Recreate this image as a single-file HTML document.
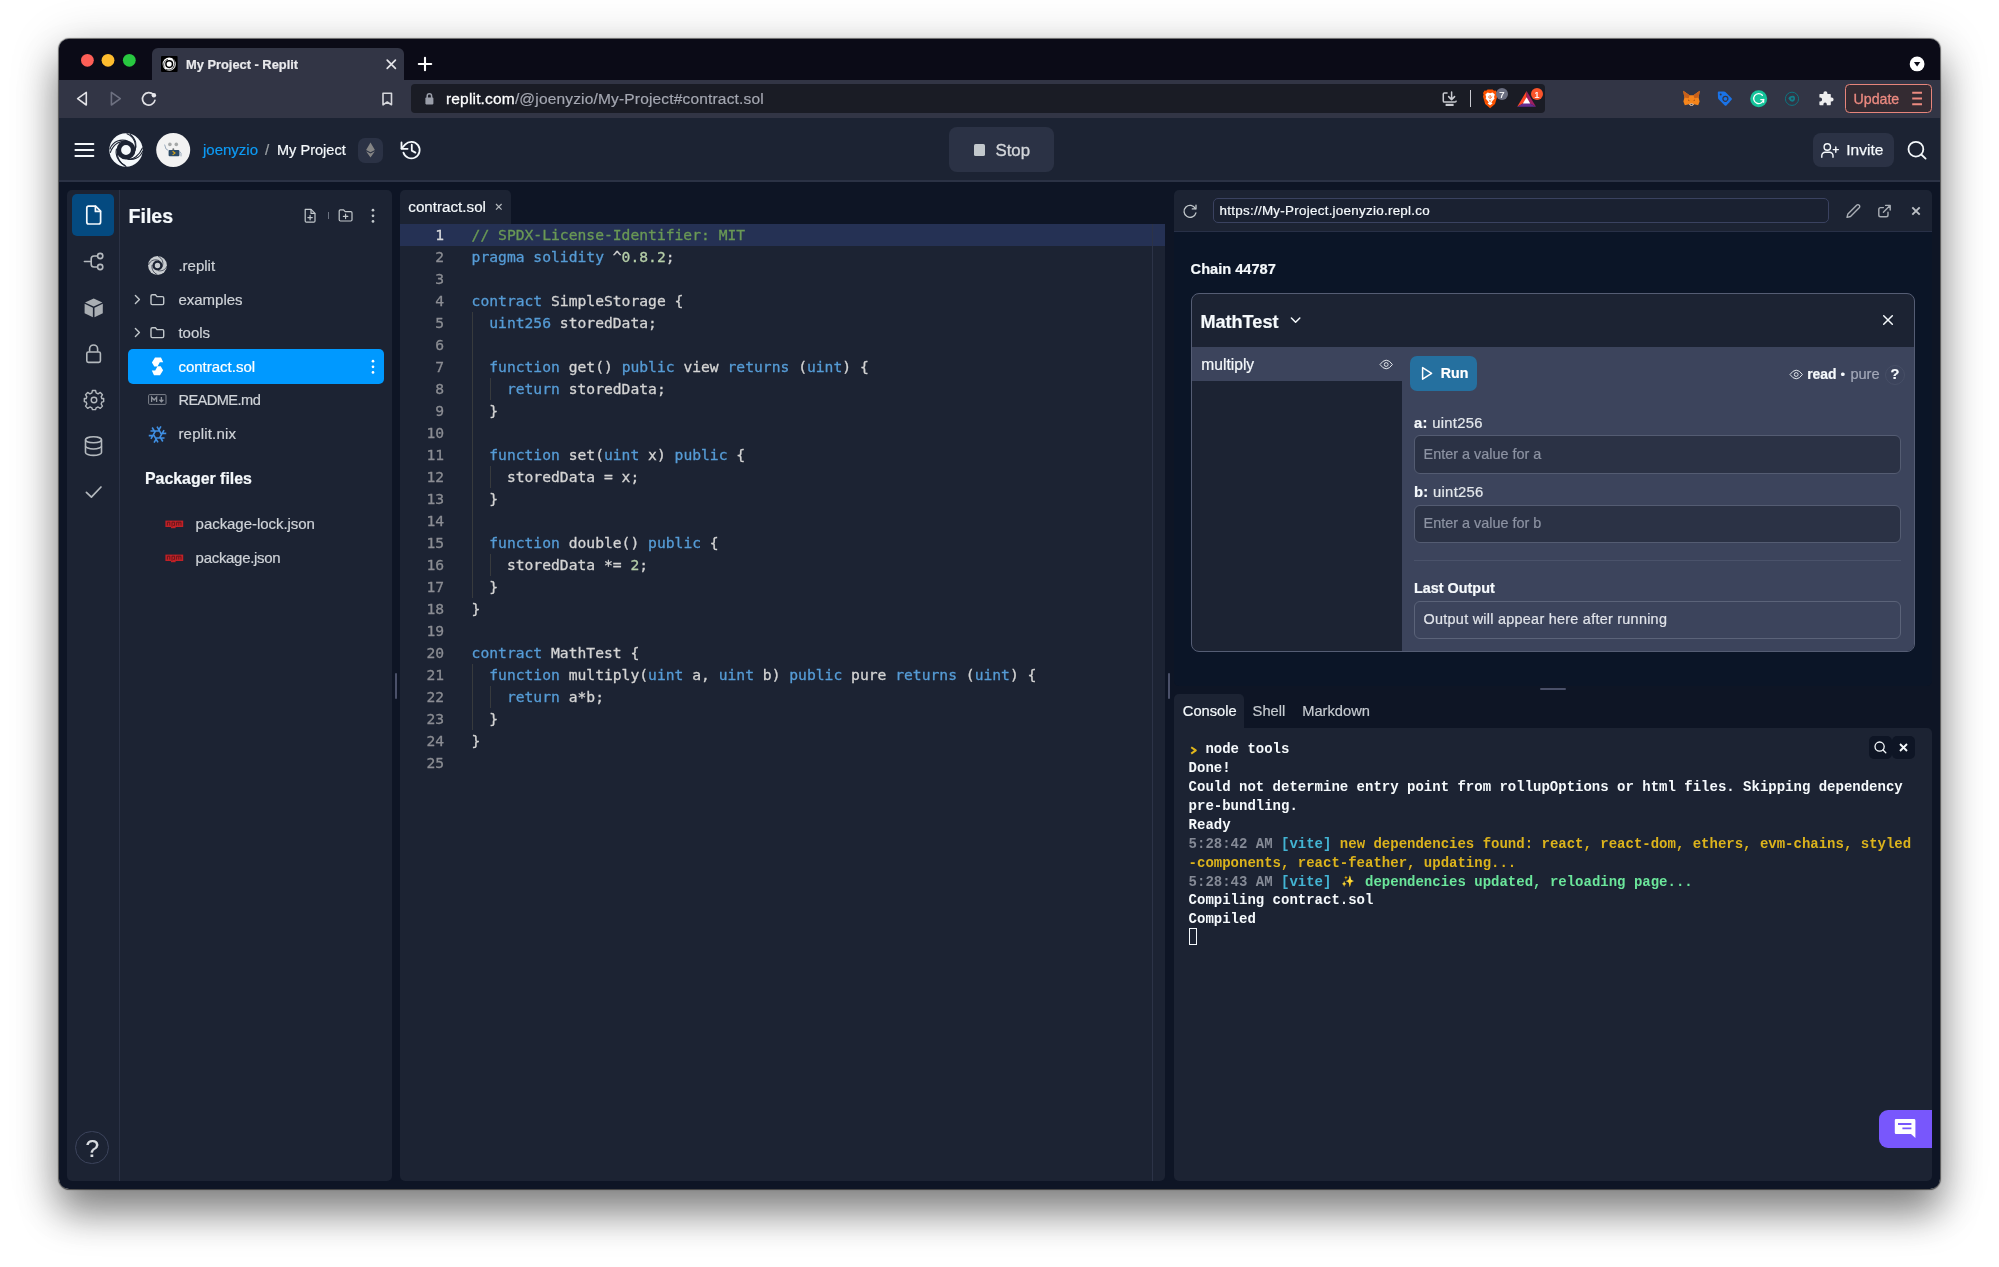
<!DOCTYPE html>
<html lang="en">
<head>
<meta charset="utf-8">
<title>My Project - Replit</title>
<style>
*{box-sizing:border-box;margin:0;padding:0}
html,body{width:1999px;height:1267px;overflow:hidden;background:#fff}
body{font-family:"Liberation Sans",sans-serif;color:#f5f9fc;position:relative}
#shadow{position:absolute;left:59px;top:39px;width:1881px;height:1150px;border-radius:11px;
  box-shadow:0 0 1px 0.5px rgba(0,0,0,.55),0 25px 38px 0 rgba(0,0,0,.40),0 8px 50px 0 rgba(0,0,0,.22)}
#win{position:absolute;left:59px;top:39px;width:1881px;height:1150px;border-radius:10px;overflow:hidden;background:#0e1525}
#pg{position:absolute;left:-59px;top:-39px;width:1999px;height:1267px;will-change:transform}
.abs{position:absolute}
svg{position:absolute;overflow:visible}
.t{position:absolute;white-space:nowrap;line-height:1;-webkit-text-stroke:.2px currentColor}
/* browser chrome */
#tabstrip{left:59px;top:39px;width:1881px;height:41px;background:#0b0b17}
#tab{left:152px;top:48px;width:252px;height:33px;background:#323545;border-radius:6px 6px 0 0}
#toolbar{left:59px;top:80px;width:1881px;height:38px;background:#323545}
#urlbar{left:411px;top:84px;width:1134px;height:29px;background:#1a1c25;border-radius:4px}
#update{left:1844.8px;top:84px;width:87.2px;height:29px;border:1.5px solid #e7857b;border-radius:4.5px;background:#342b32}
/* replit header */
#hdr{left:59px;top:118px;width:1881px;height:63px;background:#1c2333}
#hdrline{left:59px;top:180px;width:1881px;height:2px;background:#2b3245}
.btn{position:absolute;background:#2b3245;border-radius:8px}
.ft{left:178.4px;font-size:15px;color:#cfd3d8}
#code{left:400px;top:224px;width:752px;font-family:"DejaVu Sans Mono","Liberation Mono",monospace;font-size:14.66px;color:#d4d4d4;-webkit-text-stroke:.3px currentColor}
.ln{white-space:pre;height:22px;line-height:21px;position:relative;padding-left:71.6px}
.ln i{position:absolute;left:0;width:44.1px;text-align:right;font-style:normal;color:#8b8d93}
.ln i.cur{color:#d6d7da}
.k{color:#569cd6}.c{color:#6a9955}.n{color:#b5cea8}
.inp{left:1414px;width:487.4px;height:38.2px;border:1px solid #545c72;border-radius:6px;background:#2b3245}
.ph{left:1423.6px;font-size:14.4px;color:#8d93a3}
#con{left:1188.6px;top:740.3px;font-family:"Liberation Mono","DejaVu Sans Mono",monospace;font-size:14px;font-weight:bold;color:#f5f9fc}
#con div{white-space:pre;height:18.9px;line-height:18.9px;position:relative}
#con .g{color:#858a96}#con .cy{color:#43b4d3}#con .y{color:#dcb31c}#con .gr{color:#6be69b}
#con .sp{display:inline-block;width:16.8px;font-size:11px;text-align:center;vertical-align:top;color:#fff3c4;font-weight:normal}
/* panels */
.panel{position:absolute;background:#1c2333}
</style>
</head>
<body>
<div id="shadow"></div>
<div id="win"><div id="pg">

<!-- ============ BROWSER CHROME ============ -->
<div class="abs" id="tabstrip"></div>
<div class="abs" id="tab"></div>
<div class="abs" id="toolbar"></div>
<div class="abs" id="urlbar"></div>
<!-- traffic lights -->
<svg style="left:75px;top:50px" width="70" height="22" viewBox="75 50 70 22">
  <circle cx="87.4" cy="60.3" r="6.4" fill="#fe5f57"/>
  <circle cx="108" cy="60.3" r="6.4" fill="#febc2e"/>
  <circle cx="129.3" cy="60.3" r="6.4" fill="#28c840"/>
</svg>
<!-- favicon -->
<svg style="left:161px;top:56px" width="17" height="16" viewBox="0 0 17 16">
  <rect x="0" y="0" width="16.6" height="16" rx="1" fill="#000"/>
  <circle cx="8.2" cy="8.1" r="6.6" fill="#fff"/>
  <circle cx="8.2" cy="8.1" r="3.3" fill="none" stroke="#000" stroke-width="1.5"/>
  <path d="M3.2 11.6C1.8 8 3.4 4.2 7 3.4M12 3C14.4 5.4 14.2 9.6 11.6 11.6M5 13.4C8 14.6 11.6 13.4 13.4 10.6" fill="none" stroke="#000" stroke-width=".7"/>
</svg>
<div class="t" style="left:186px;top:58.9px;font-size:12.85px;font-weight:bold;color:#e9e9ec">My Project - Replit</div>
<!-- tab close -->
<svg style="left:386px;top:59px" width="11" height="11" viewBox="0 0 11 11"><path d="M1.2 1.2L9.4 9.4M9.4 1.2L1.2 9.4" stroke="#e4e4e8" stroke-width="1.7" stroke-linecap="round" fill="none"/></svg>
<!-- new tab plus -->
<svg style="left:418px;top:57px" width="14" height="14" viewBox="0 0 14 14"><path d="M7 .8V13.2M.8 7H13.2" stroke="#fff" stroke-width="2.1" stroke-linecap="round" fill="none"/></svg>
<!-- tab dropdown -->
<svg style="left:1909px;top:56px" width="16" height="16" viewBox="0 0 16 16"><circle cx="8.1" cy="7.9" r="7.4" fill="#fff"/><path d="M4.9 6.1H11.3L8.1 10.6Z" fill="#0b0b17"/></svg>

<!-- nav arrows -->
<svg style="left:74px;top:88px" width="90" height="22" viewBox="74 88 90 22" fill="none" stroke-linejoin="round" stroke-linecap="round">
  <path d="M86.3 92.4V105L77.6 98.6Z" stroke="#e2e2e6" stroke-width="1.6"/>
  <path d="M111.4 92.4V105L120.3 98.6Z" stroke="#6d7080" stroke-width="1.6"/>
  <path d="M153.4 94.6A6.3 6.3 0 1 0 154.9 100.4" stroke="#e2e2e6" stroke-width="1.7"/>
  <circle cx="153.9" cy="95.3" r="2.2" fill="#e8e8ec" stroke="none"/>
</svg>
<!-- bookmark -->
<svg style="left:380px;top:90px" width="14" height="18" viewBox="380 90 14 18" fill="none"><path d="M383 93.2H391.5V104.8L387.25 102L383 104.8Z" stroke="#d6d7dc" stroke-width="1.6" stroke-linejoin="round"/></svg>
<!-- lock -->
<svg style="left:424px;top:92px" width="11" height="13" viewBox="0 0 11 13"><rect x="1.4" y="5.6" width="8" height="6.8" rx=".8" fill="#9a9ea9"/><path d="M3.2 6V4A2.2 2.2 0 0 1 7.6 4V6" stroke="#9a9ea9" stroke-width="1.5" fill="none"/></svg>
<div class="t" style="left:446px;top:90.9px;font-size:15.5px;letter-spacing:.17px;color:#a4a7b1"><span style="color:#fff;-webkit-text-stroke:.3px #fff">replit.com</span>/@joenyzio/My-Project#contract.sol</div>

<!-- install icon -->
<svg style="left:1442px;top:91px" width="17" height="16" viewBox="0 0 17 16" fill="none" stroke="#c9cad0" stroke-width="1.5">
  <path d="M5.6 2H2.4Q1.3 2 1.3 3.1V10Q1.3 11.1 2.4 11.1H13Q14.1 11.1 14.3 9.6" />
  <path d="M9.6 1V8.2M6.6 5.6L9.6 8.6L12.6 5.6" stroke-linecap="round" stroke-linejoin="round"/>
  <path d="M3.6 13.9H11.6" stroke-width="2.2"/>
</svg>
<div class="abs" style="left:1469.8px;top:90px;width:1.4px;height:17px;background:#c9cad0"></div>
<!-- brave lion -->
<svg style="left:1482px;top:89px" width="16" height="20" viewBox="0 0 16 20">
  <path d="M4.2 1.8L5.6 .4H10.6L12 1.8L13.6 1.6L15.2 4L14.6 5.6L15.2 7.6L13 15L8.1 19.2L3.2 15L1 7.6L1.6 5.6L1 4L2.6 1.6Z" fill="#fb5200"/>
  <path d="M8.1 4.2L10.6 3.6L12.8 5.6L12 8L12.6 9.4L10.4 12L9.4 13.4L10.6 14.6L8.1 16.2L5.6 14.6L6.8 13.4L5.8 12L3.6 9.4L4.2 8L3.4 5.6L5.6 3.6Z" fill="#fff"/>
  <path d="M8.1 6V10M6 7.6L7.2 8.6M10.2 7.6L9 8.6M7 11.4L8.1 12.4L9.2 11.4" stroke="#fb5200" stroke-width=".9" fill="none"/>
</svg>
<div class="abs" style="left:1495.6px;top:88.3px;width:12.2px;height:12.2px;border-radius:50%;background:#6a6e80"></div>
<div class="t" style="left:1499.2px;top:89.6px;font-size:9.5px;color:#fff">7</div>
<!-- BAT -->
<svg style="left:1516px;top:90px" width="21" height="18" viewBox="1516 90 21 18">
  <path d="M1526.6 91L1517.2 106.8L1526.6 101.4Z" fill="#ff4724"/>
  <path d="M1526.6 91L1536 106.8L1526.6 101.4Z" fill="#9e1f63"/>
  <path d="M1517.2 106.8H1536L1526.6 101.4Z" fill="#662d91"/>
  <path d="M1526.6 97.2L1522.9 103.6H1530.3Z" fill="#fff"/>
</svg>
<div class="abs" style="left:1530.7px;top:88.3px;width:12.2px;height:12.2px;border-radius:50%;background:#fb542b"></div>
<div class="t" style="left:1534.2px;top:89.6px;font-size:9.5px;color:#fff">1</div>

<!-- metamask fox -->
<svg style="left:1682px;top:90px" width="19" height="17" viewBox="0 0 19 17">
  <path d="M1.2 .8L7.6 5.2H11.4L17.8 .8L16.6 7.6L17.6 11.6L16.2 15.2L12 14.2L10.6 15.6H8.4L7 14.2L2.8 15.2L1.4 11.6L2.4 7.6Z" fill="#f6851b"/>
  <path d="M1.2 .8L7.6 5.2L6.6 8.2L2.4 7.6Z" fill="#c8601a"/>
  <path d="M17.8 .8L11.4 5.2L12.4 8.2L16.6 7.6Z" fill="#c8601a"/>
  <path d="M7 14.2L8.4 13.4H10.6L12 14.2L10.6 15.8H8.4Z" fill="#d7c1b3"/>
  <path d="M8.6 14.6H10.4" stroke="#233447" stroke-width="1"/>
  <path d="M6 10L7.4 10.6M13 10L11.6 10.6" stroke="#8a4310" stroke-width=".8"/>
</svg>
<!-- blue tag -->
<svg style="left:1716px;top:90px" width="18" height="18" viewBox="0 0 18 18">
  <path d="M1.8 2.6Q1.8 1.6 2.8 1.6L8 1.4Q8.8 1.4 9.4 2L15.6 8.2Q16.4 9 15.6 9.8L10.4 15.4Q9.6 16.2 8.8 15.4L2.6 9.2Q2 8.6 2 7.8Z" fill="#1a73e8"/>
  <circle cx="4.7" cy="4.4" r="1" fill="#323545"/>
  <circle cx="9.4" cy="8.8" r="2.5" fill="none" stroke="#323545" stroke-width="1.2"/>
  <path d="M11.2 10.8L13 12.8" stroke="#1a73e8" stroke-width="1.2"/>
</svg>
<!-- grammarly -->
<svg style="left:1750px;top:90px" width="18" height="18" viewBox="0 0 18 18">
  <circle cx="8.7" cy="8.7" r="8.5" fill="#15c39a"/>
  <path d="M12.4 5.2A5 5 0 1 0 13.6 9.6H10.8" fill="none" stroke="#fff" stroke-width="1.3" stroke-linecap="round"/>
  <path d="M13.6 9.4V12.2" stroke="#fff" stroke-width="1.3" stroke-linecap="round"/>
</svg>
<!-- teal circle -->
<svg style="left:1784px;top:91px" width="16" height="16" viewBox="0 0 16 16">
  <circle cx="8" cy="7.8" r="6.6" fill="none" stroke="#0e7480" stroke-width="1"/>
  <path d="M4.4 7.6Q5.4 4.6 9.2 4.8Q11.2 5 11 8Q10.6 11 8.2 10.8Q5.6 10.2 4.4 7.6Z" fill="#127d89"/>
  <circle cx="8.2" cy="7.6" r="1.2" fill="#2c4452"/>
</svg>
<!-- puzzle -->
<svg style="left:1817px;top:90px" width="18" height="17" viewBox="0 0 18 17">
  <path d="M6.4 3.2A2 2 0 0 1 10.4 3.2V4H13.2Q13.8 4 13.8 4.6V7.4H14.6A2 2 0 0 1 14.6 11.4H13.8V14.6Q13.8 15.2 13.2 15.2H9.8V14.2A1.7 1.7 0 0 0 6.4 14.2V15.2H3Q2.4 15.2 2.4 14.6V11.4H3.2A1.9 1.9 0 0 0 3.2 7.6H2.4V4.6Q2.4 4 3 4H6.4Z" fill="#ededee"/>
</svg>
<!-- update -->
<div class="abs" id="update"></div>
<div class="t" style="left:1853.5px;top:92px;font-size:14.2px;color:#ec8a80;-webkit-text-stroke:.3px #ec8a80">Update</div>
<svg style="left:1912px;top:91px" width="11" height="15" viewBox="0 0 11 15"><path d="M.2 1.8H10M.2 7.5H10M.2 13.2H10" stroke="#ec8a80" stroke-width="1.9"/></svg>


<!-- ============ REPLIT HEADER ============ -->
<div class="abs" id="hdr"></div>
<div class="abs" id="hdrline"></div>
<!-- hamburger -->
<svg style="left:74px;top:142px" width="21" height="16" viewBox="0 0 21 16"><path d="M1.4 2H19.4M1.4 8H19.4M1.4 14H19.4" stroke="#f5f9fc" stroke-width="1.9" stroke-linecap="round"/></svg>
<!-- replit logo -->
<svg style="left:108px;top:132px" width="36" height="36" viewBox="-18 -18 36 36">
  <circle cx="0" cy="0" r="16.7" fill="#f5f9fc"/>
  <circle cx="0" cy="0" r="7.2" fill="none" stroke="#1c2333" stroke-width="4.6"/>
  <g fill="none" stroke="#1c2333" stroke-width="1.1" stroke-linecap="round">
    <path d="M-16 -1C-13 -9 -5 -11.6 2.6 -8.6"/>
    <path d="M-15.6 2.4C-12.4 -6.6 -5 -10 1 -8"/>
    <path d="M1 -16.2C8.6 -13 11.4 -5 8 2.4"/>
    <path d="M4.2 -15.6C10 -11 11.4 -4.6 8.6 1"/>
    <path d="M16.6 1.4C14 8 7 10.6 1.2 9"/>
    <path d="M16.4 -2C13 6 7 9.6 3 9"/>
    <path d="M-9.6 -1C-11 6 -7 13 0 16.4"/>
    <path d="M-8.6 3C-8.6 9 -4.6 13.6 -1 15.6"/>
  </g>
</svg>
<!-- avatar -->
<svg style="left:156px;top:133px" width="34" height="34" viewBox="156 133 34 34">
  <circle cx="173.2" cy="150" r="17" fill="#f2f2f2"/>
  <circle cx="169.9" cy="144.4" r="1.8" fill="#a5a8a8"/>
  <circle cx="176.3" cy="144.4" r="1.8" fill="#a5a8a8"/>
  <rect x="168.6" y="150" width="10.8" height="6.2" rx="1" fill="#2b4a66"/>
  <path d="M172.6 151.3L175 153.1L172.6 154.9" stroke="#d9a514" stroke-width="1.1" fill="none"/>
  <path d="M164.6 144.6L166 149L168.4 150.4M179.6 151.4L181 153.4V156.4" stroke="#8fa0b3" stroke-width=".9" fill="none"/>
  <circle cx="173.3" cy="149.3" r="1" fill="#6b6f72"/>
</svg>
<div class="t" style="left:203px;top:142.1px;font-size:15px;color:#0d9bf5">joenyzio</div>
<div class="t" style="left:265px;top:142.1px;font-size:15px;color:#9da2a6">/</div>
<div class="t" style="left:277px;top:143px;font-size:14.55px;color:#f5f9fc">My Project</div>
<!-- eth badge -->
<div class="btn" style="left:358.3px;top:137.5px;width:24.8px;height:25.2px;border-radius:7px"></div>
<svg style="left:365px;top:142px" width="11" height="16" viewBox="365 142 11 16">
  <path d="M370.5 142.6L374.9 150L370.5 152.2L366.1 150Z" fill="#858585"/>
  <path d="M370.5 153.4L374.9 151.2L370.5 157.4L366.1 151.2Z" fill="#858585"/>
</svg>
<!-- history -->
<svg style="left:399px;top:139px" width="24" height="22" viewBox="399 139 24 22" fill="none" stroke="#f5f9fc" stroke-width="1.8" stroke-linecap="round" stroke-linejoin="round">
  <path d="M403.4 152.6A8.3 8.3 0 1 0 405.3 144.4L401.6 148.4"/>
  <path d="M401.5 142.4V148.8H407.6"/>
  <path d="M411.8 144.7V150.6L415.4 152.6"/>
</svg>
<!-- stop -->
<div class="btn" style="left:949px;top:127px;width:105px;height:45px;border-radius:8px"></div>
<div class="abs" style="left:974px;top:144.4px;width:11.2px;height:11.4px;border-radius:1.6px;background:#c2c8cc"></div>
<div class="t" style="left:995.5px;top:143.3px;font-size:16.8px;color:#d3d6da;-webkit-text-stroke:.35px #d3d6da">Stop</div>
<!-- invite -->
<div class="btn" style="left:1812.5px;top:133.4px;width:81.8px;height:33.6px;border-radius:8px"></div>
<svg style="left:1820px;top:142px" width="20" height="17" viewBox="1820 142 20 17" fill="none" stroke="#f5f9fc" stroke-width="1.4" stroke-linecap="round">
  <circle cx="1827.3" cy="147" r="3.2"/>
  <path d="M1821.8 157.2V155.6A3.4 3.4 0 0 1 1825.2 152.2H1829.6A3.4 3.4 0 0 1 1833 155.6V157.2"/>
  <path d="M1835.8 147V152.2M1833.2 149.6H1838.4"/>
</svg>
<div class="t" style="left:1846.3px;top:141.6px;font-size:15.5px;color:#f5f9fc;-webkit-text-stroke:.25px #f5f9fc">Invite</div>
<!-- search -->
<svg style="left:1906px;top:140px" width="22" height="22" viewBox="1906 140 22 22" fill="none" stroke="#f5f9fc" stroke-width="1.8" stroke-linecap="round"><circle cx="1915.9" cy="149.2" r="7.4"/><path d="M1921.3 154.5L1925.6 158.6"/></svg>


<!-- ============ SIDEBAR + FILES ============ -->
<div class="panel" style="left:67px;top:190px;width:325px;height:991px;border-radius:5px"></div>
<div class="abs" style="left:119px;top:190px;width:1px;height:991px;background:#2b3245"></div>
<!-- sidebar icons -->
<div class="abs" style="left:72px;top:194px;width:42.4px;height:42px;border-radius:5px;background:#044a80"></div>
<svg style="left:84px;top:203px" width="20" height="24" viewBox="84 203 20 24" fill="none" stroke="#f5f9fc" stroke-width="1.7" stroke-linejoin="round" stroke-linecap="round">
  <path d="M88.6 206.2H95.6L100.6 211.2V222Q100.6 224 98.6 224H88.6Q86.8 224 86.8 222V208Q86.8 206.2 88.6 206.2Z"/>
  <path d="M95.4 206.4V211.4H100.4"/>
</svg>
<svg style="left:82px;top:252px" width="24" height="20" viewBox="82 252 24 20" fill="none" stroke="#b4b9be" stroke-width="1.6" stroke-linecap="round">
  <path d="M84.4 261.5H91"/>
  <path d="M97.4 256H94Q91.2 256 91.2 258.8V264.2Q91.2 267 94 267H97.4"/>
  <circle cx="100.2" cy="256" r="2.6"/><circle cx="100.2" cy="267" r="2.6"/>
</svg>
<svg style="left:83px;top:297px" width="22" height="22" viewBox="83 297 22 22">
  <path d="M93.7 298.4L102.4 302.4L93.7 306.4L85 302.4Z" fill="#a9aeb3"/>
  <path d="M84.6 303.8L92.9 307.7V317.2L84.6 313.2Z" fill="#a9aeb3"/>
  <path d="M102.8 303.8L94.5 307.7V317.2L102.8 313.2Z" fill="#a9aeb3"/>
</svg>
<svg style="left:84px;top:342px" width="20" height="23" viewBox="84 342 20 23" fill="none" stroke="#b4b9be" stroke-width="1.6" stroke-linejoin="round">
  <rect x="86.8" y="352" width="13.6" height="10.4" rx="1.6"/>
  <path d="M89.6 351.8V349A4 4 0 0 1 97.6 349V351.8"/>
</svg>
<!-- gear -->
<svg style="left:82px;top:388px" width="24" height="24" viewBox="-12.9 -12.9 25.8 25.8" fill="none" stroke="#b4b9be" stroke-width="1.5" stroke-linejoin="round">
  <circle cx="0" cy="0" r="3"/>
  <path d="M-1.7 -10.2H1.7L2.3 -7.6L4.4 -6.6L6.8 -8.1L9.1 -5.7L7.7 -3.4L8.5 -1.4L10.4 -1.7V1.7L8.5 2.2L7.7 4.3L9.1 6.6L6.8 9L4.4 7.5L2.3 8.4L1.7 10.4H-1.7L-2.3 8.4L-4.4 7.5L-6.8 9L-9.1 6.6L-7.7 4.3L-8.5 2.2L-10.4 1.7V-1.7L-8.5 -1.4L-7.7 -3.4L-9.1 -5.7L-6.8 -8.1L-4.4 -6.6L-2.3 -7.6Z"/>
</svg>
<!-- database -->
<svg style="left:83px;top:435px" width="22" height="23" viewBox="83 435 22 23" fill="none" stroke="#b4b9be" stroke-width="1.6">
  <ellipse cx="93.5" cy="439.8" rx="8" ry="3"/>
  <path d="M85.5 439.8V452.4C85.5 454 89 455.4 93.5 455.4S101.5 454 101.5 452.4V439.8"/>
  <path d="M85.5 446C85.5 447.6 89 449 93.5 449S101.5 447.6 101.5 446"/>
</svg>
<!-- check -->
<svg style="left:84px;top:484px" width="20" height="16" viewBox="84 484 20 16" fill="none" stroke="#b4b9be" stroke-width="1.7" stroke-linecap="round" stroke-linejoin="round"><path d="M86.4 492.4L91.4 497.2L101 487"/></svg>
<!-- help -->
<div class="abs" style="left:75.4px;top:1130.6px;width:33.8px;height:33.8px;border-radius:50%;border:1px solid #3c445c;background:#1c2333"></div>
<div class="t" style="left:85.6px;top:1136.6px;font-size:24.5px;color:#d9dce0">?</div>

<!-- files header -->
<div class="t" style="left:128.5px;top:207.4px;font-size:19.6px;font-weight:bold;color:#f5f9fc">Files</div>
<svg style="left:303px;top:208px" width="14" height="16" viewBox="0 0 14 16" fill="none" stroke="#c2c8cc" stroke-width="1.2" stroke-linejoin="round" stroke-linecap="round">
  <path d="M2.2 1.4H8L12 5.4V13Q12 14.2 10.8 14.2H3.4Q2.2 14.2 2.2 13Z"/><path d="M8 1.6V5.4H11.8"/><path d="M7.1 7.4V11.8M4.9 9.6H9.3"/>
</svg>
<div class="abs" style="left:327.6px;top:212.4px;width:1px;height:7px;background:#6b7280"></div>
<svg style="left:338px;top:208px" width="16" height="15" viewBox="0 0 16 15" fill="none" stroke="#c2c8cc" stroke-width="1.2" stroke-linejoin="round" stroke-linecap="round">
  <path d="M1.2 3Q1.2 1.8 2.4 1.8H5.6L7.2 3.6H12.8Q14 3.6 14 4.8V11.8Q14 13 12.8 13H2.4Q1.2 13 1.2 11.8Z"/><path d="M7.6 6.2V10.6M5.4 8.4H9.8"/>
</svg>
<svg style="left:371px;top:208px" width="4" height="16" viewBox="0 0 4 16" fill="#c2c8cc"><circle cx="2" cy="2.2" r="1.35"/><circle cx="2" cy="7.8" r="1.35"/><circle cx="2" cy="13.4" r="1.35"/></svg>

<!-- file tree -->
<div class="abs" style="left:128px;top:349.3px;width:255.6px;height:34.3px;border-radius:5px;background:#0099ff"></div>
<svg style="left:148px;top:256px" width="19" height="19" viewBox="-9.5 -9.5 19 19">
  <circle r="9.4" fill="#c9cdd1"/>
  <circle r="3.9" fill="none" stroke="#1c2333" stroke-width="2.4"/>
  <g fill="none" stroke="#1c2333" stroke-width=".7"><path d="M-9 -.6C-7 -5.6 -2.6 -6.6 1.6 -4.9"/><path d="M.6 -9.1C5 -7.2 6.4 -2.8 4.6 1.4"/><path d="M9.3 .8C7.8 4.6 4 6 .6 5.1"/><path d="M-5.4 -.6C-6.2 3.6 -4 7.4 0 9.2"/></g>
</svg>
<svg style="left:133px;top:293px" width="34" height="14" viewBox="133 293 34 14" fill="none" stroke="#c2c8cc" stroke-width="1.4" stroke-linecap="round" stroke-linejoin="round">
  <path d="M135.4 295.6L139.4 299.5L135.4 303.4"/>
  <path d="M151 296Q151 294.7 152.3 294.7H155.4L157 296.6H162.4Q163.7 296.6 163.7 297.9V303.3Q163.7 304.6 162.4 304.6H152.3Q151 304.6 151 303.3Z"/>
</svg>
<svg style="left:133px;top:326.4px" width="34" height="14" viewBox="133 293 34 14" fill="none" stroke="#c2c8cc" stroke-width="1.4" stroke-linecap="round" stroke-linejoin="round">
  <path d="M135.4 295.6L139.4 299.5L135.4 303.4"/>
  <path d="M151 296Q151 294.7 152.3 294.7H155.4L157 296.6H162.4Q163.7 296.6 163.7 297.9V303.3Q163.7 304.6 162.4 304.6H152.3Q151 304.6 151 303.3Z"/>
</svg>
<!-- solidity icon -->
<svg style="left:150px;top:356px" width="15" height="21" viewBox="150 356 15 21" fill="#fff">
  <path d="M151.9 362.5L155 357.5H161L163.2 362.3H159.8L157.5 366.5H154.3Z"/>
  <path d="M163.1 370.3L160 375.3H154L151.8 370.5H155.2L157.5 366.3H160.7Z"/>
</svg>
<!-- md icon -->
<svg style="left:148px;top:394px" width="19" height="11" viewBox="0 0 19 11" fill="none" stroke="#7d828c" stroke-width="1">
  <rect x=".6" y=".6" width="17.4" height="9.8" rx="1"/>
  <path d="M3.6 8V3.2L6.1 6L8.6 3.2V8" stroke-width="1.3" stroke="#8e939c"/>
  <path d="M13.4 3V7.6M11.4 5.8L13.4 7.8L15.4 5.8" stroke-width="1.3" stroke="#8e939c"/>
</svg>
<!-- nix icon -->
<svg style="left:148px;top:424.5px" width="19" height="19" viewBox="-10 -10 20 20" fill="none" stroke="#3f8fe3" stroke-width="1.7"><path d="M2.60 -3.70L-7.40 -3.70M-3.40 -3.70L-5.60 -7.40M4.50 0.40L-0.50 -8.26M1.50 -4.79L3.61 -8.55M1.90 4.10L6.90 -4.56M4.90 -1.09L9.21 -1.15M-2.60 3.70L7.40 3.70M3.40 3.70L5.60 7.40M-4.50 -0.40L0.50 8.26M-1.50 4.79L-3.61 8.55M-1.90 -4.10L-6.90 4.56M-4.90 1.09L-9.21 1.15"/></svg>
<svg style="left:371px;top:359px" width="4" height="16" viewBox="0 0 4 16" fill="#fff"><circle cx="2" cy="2.2" r="1.35"/><circle cx="2" cy="7.8" r="1.35"/><circle cx="2" cy="13.4" r="1.35"/></svg>
<div class="t ft" style="top:258px">.replit</div>
<div class="t ft" style="top:291.5px">examples</div>
<div class="t ft" style="top:325px">tools</div>
<div class="t ft" style="top:358.5px;color:#fff">contract.sol</div>
<div class="t ft" style="top:393px;letter-spacing:-.55px;font-size:14.6px">README.md</div>
<div class="t ft" style="top:425.8px;letter-spacing:.2px">replit.nix</div>
<div class="t" style="left:145px;top:471.4px;font-size:15.9px;font-weight:bold;color:#f5f9fc">Packager files</div>
<svg style="left:165px;top:520px" width="19" height="9" viewBox="0 0 19 9"><rect x=".4" y=".6" width="17.8" height="6.4" fill="#c12127"/><rect x="6" y="6.8" width="4.6" height="1.4" fill="#c12127"/><path d="M2.4 5.6V2.2H4.8V5.6M7 6.6V2.2H9.6V5.4H8.2M11.6 5.6V2.2H16V5.6M13.8 2.6V5.6" stroke="#5c1518" stroke-width=".9" fill="none"/></svg>
<svg style="left:165px;top:553.5px" width="19" height="9" viewBox="0 0 19 9"><rect x=".4" y=".6" width="17.8" height="6.4" fill="#c12127"/><rect x="6" y="6.8" width="4.6" height="1.4" fill="#c12127"/><path d="M2.4 5.6V2.2H4.8V5.6M7 6.6V2.2H9.6V5.4H8.2M11.6 5.6V2.2H16V5.6M13.8 2.6V5.6" stroke="#5c1518" stroke-width=".9" fill="none"/></svg>
<div class="t ft" style="left:195.6px;top:515.6px;letter-spacing:-.05px">package-lock.json</div>
<div class="t ft" style="left:195.6px;top:549.5px;letter-spacing:-.3px">package.json</div>


<!-- ============ EDITOR ============ -->
<!--EDITOR-START-->
<div class="panel" style="left:400px;top:224px;width:765.4px;height:957px;border-radius:0 0 5px 5px"></div>
<div class="panel" style="left:400px;top:190px;width:111.4px;height:35px;border-radius:5px 5px 0 0"></div>
<div class="t" style="left:408.3px;top:198.6px;font-size:15.2px;color:#f5f9fc">contract.sol</div>
<svg style="left:495px;top:203px" width="8" height="8" viewBox="0 0 8 8"><path d="M1 1L6.6 6.6M6.6 1L1 6.6" stroke="#b4b9be" stroke-width="1.2" fill="none"/></svg>
<div class="abs" style="left:400px;top:224px;width:765.4px;height:22px;background:#253154"></div>
<div class="abs" style="left:1152.4px;top:224px;width:1px;height:957px;background:#2c3347"></div>
<div class="abs" style="left:472.2px;top:312px;width:1px;height:286px;background:#373a3d"></div>
<div class="abs" style="left:472.2px;top:664px;width:1px;height:66px;background:#373a3d"></div>
<div class="abs" style="left:489.8px;top:378px;width:1px;height:22px;background:#373a3d"></div>
<div class="abs" style="left:489.8px;top:466px;width:1px;height:22px;background:#373a3d"></div>
<div class="abs" style="left:489.8px;top:554px;width:1px;height:22px;background:#373a3d"></div>
<div class="abs" style="left:489.8px;top:686px;width:1px;height:22px;background:#373a3d"></div>
<div class="abs" id="code">
<div class="ln"><i class="cur">1</i><span class="c">// SPDX-License-Identifier: MIT</span></div>
<div class="ln"><i>2</i><span class="k">pragma solidity</span> ^<span class="n">0.8.2</span>;</div>
<div class="ln"><i>3</i></div>
<div class="ln"><i>4</i><span class="k">contract</span> SimpleStorage {</div>
<div class="ln"><i>5</i>  <span class="k">uint256</span> storedData;</div>
<div class="ln"><i>6</i></div>
<div class="ln"><i>7</i>  <span class="k">function</span> get() <span class="k">public</span> view <span class="k">returns</span> (<span class="k">uint</span>) {</div>
<div class="ln"><i>8</i>    <span class="k">return</span> storedData;</div>
<div class="ln"><i>9</i>  }</div>
<div class="ln"><i>10</i></div>
<div class="ln"><i>11</i>  <span class="k">function</span> set(<span class="k">uint</span> x) <span class="k">public</span> {</div>
<div class="ln"><i>12</i>    storedData = x;</div>
<div class="ln"><i>13</i>  }</div>
<div class="ln"><i>14</i></div>
<div class="ln"><i>15</i>  <span class="k">function</span> double() <span class="k">public</span> {</div>
<div class="ln"><i>16</i>    storedData *= <span class="n">2</span>;</div>
<div class="ln"><i>17</i>  }</div>
<div class="ln"><i>18</i>}</div>
<div class="ln"><i>19</i></div>
<div class="ln"><i>20</i><span class="k">contract</span> MathTest {</div>
<div class="ln"><i>21</i>  <span class="k">function</span> multiply(<span class="k">uint</span> a, <span class="k">uint</span> b) <span class="k">public</span> pure <span class="k">returns</span> (<span class="k">uint</span>) {</div>
<div class="ln"><i>22</i>    <span class="k">return</span> a*b;</div>
<div class="ln"><i>23</i>  }</div>
<div class="ln"><i>24</i>}</div>
<div class="ln"><i>25</i></div>
</div>
<div class="abs" style="left:394.7px;top:672.8px;width:2.2px;height:26px;background:#4a5069;border-radius:1px"></div>
<!--EDITOR-END-->

<!-- ============ WEBVIEW ============ -->
<div class="abs" style="left:1174px;top:190px;width:758px;height:496px;border-radius:5px;background:#0b1527"></div>
<div class="panel" style="left:1174px;top:190px;width:758px;height:41.5px;border-radius:5px 5px 0 0;border-bottom:1px solid #283047"></div>
<svg style="left:1182px;top:203px" width="16" height="16" viewBox="1182 203 16 16" fill="none" stroke="#c2c8cc" stroke-width="1.3" stroke-linecap="round" stroke-linejoin="round">
  <path d="M1195.4 208.6A6 6 0 1 0 1195.9 212.8"/><path d="M1196 205.2V208.9H1192.3"/>
</svg>
<div class="abs" style="left:1213.4px;top:198.2px;width:615.4px;height:24.6px;border:1px solid #3a4260;border-radius:5px;background:#1a2131"></div>
<div class="t" style="left:1219.6px;top:204px;font-size:13.4px;letter-spacing:.27px;color:#f5f9fc">https://My-Project.joenyzio.repl.co</div>
<svg style="left:1845px;top:203px" width="16" height="16" viewBox="1845 203 16 16" fill="none" stroke="#a9aeb5" stroke-width="1.4" stroke-linejoin="round"><path d="M1847 217.4L1847.9 213.9L1856.6 205.2A1.7 1.7 0 0 1 1859.2 207.8L1850.5 216.5Z"/></svg>
<svg style="left:1876px;top:203px" width="16" height="16" viewBox="1876 203 16 16" fill="none" stroke="#a9aeb5" stroke-width="1.4" stroke-linecap="round" stroke-linejoin="round"><path d="M1883.4 207.6H1880.6Q1878.8 207.6 1878.8 209.4V215Q1878.8 216.8 1880.6 216.8H1886.2Q1888 216.8 1888 215V212.2"/><path d="M1883.4 212.2L1890 205.6M1885.6 205.4H1890.2V210"/></svg>
<svg style="left:1911px;top:206px" width="10" height="10" viewBox="0 0 10 10"><path d="M1.3 1.3L8.7 8.7M8.7 1.3L1.3 8.7" stroke="#bcc0c6" stroke-width="1.9" fill="none"/></svg>

<div class="t" style="left:1190.6px;top:261.7px;font-size:14.6px;font-weight:bold;color:#f5f9fc">Chain 44787</div>
<!-- card -->
<div class="abs" style="left:1191px;top:293px;width:724px;height:358.6px;border:1px solid #555d74;border-radius:8px;background:#1c2333;overflow:hidden">
  <div class="abs" style="left:0;top:52.6px;width:210.6px;height:34.2px;background:#3c445c"></div>
  <div class="abs" style="left:210.4px;top:52.6px;width:513px;height:306px;background:#3c445c"></div>
</div>
<div class="t" style="left:1200.4px;top:312.6px;font-size:18.1px;font-weight:bold;color:#f5f9fc">MathTest</div>
<svg style="left:1290px;top:316px" width="12" height="9" viewBox="0 0 12 9" fill="none" stroke="#f5f9fc" stroke-width="1.5" stroke-linecap="round" stroke-linejoin="round"><path d="M1.4 2L5.6 6.2L9.8 2"/></svg>
<svg style="left:1882px;top:314px" width="12" height="12" viewBox="0 0 12 12"><path d="M1.7 1.7L10.3 10.3M10.3 1.7L1.7 10.3" stroke="#f5f9fc" stroke-width="1.5" stroke-linecap="round" fill="none"/></svg>
<div class="t" style="left:1201.3px;top:357.4px;font-size:15.6px;color:#f5f9fc">multiply</div>
<svg style="left:1379px;top:359px" width="14" height="11" viewBox="0 0 14 11" fill="none" stroke="#e4e8ec" stroke-width="1"><path d="M1 5.5Q4 1.2 7.2 1.2T13.4 5.5Q10.4 9.8 7.2 9.8T1 5.5Z"/><circle cx="7.2" cy="5.5" r="1.9"/></svg>
<!-- run -->
<div class="abs" style="left:1410.2px;top:356px;width:66.8px;height:35px;border-radius:7px;background:#25709f"></div>
<svg style="left:1421px;top:366px" width="12" height="15" viewBox="0 0 12 15" fill="none" stroke="#fff" stroke-width="1.5" stroke-linejoin="round"><path d="M1.6 1.6V13.2L10.6 7.4Z"/></svg>
<div class="t" style="left:1440.8px;top:366.4px;font-size:14.2px;font-weight:bold;color:#fff">Run</div>
<svg style="left:1789px;top:369px" width="14" height="11" viewBox="0 0 14 11" fill="none" stroke="#e4e8ec" stroke-width="1"><path d="M1 5.5Q4 1.2 7.2 1.2T13.4 5.5Q10.4 9.8 7.2 9.8T1 5.5Z"/><circle cx="7.2" cy="5.5" r="1.9"/></svg>
<div class="t" style="left:1807.2px;top:367.6px;font-size:13.9px;font-weight:bold;color:#f5f9fc">read</div><div class="t" style="left:1840.6px;top:368px;font-size:13px;color:#f5f9fc">•</div><div class="t" style="left:1850.4px;top:366.7px;font-size:14.6px;color:#a3a8b8">pure</div>
<div class="abs" style="left:1885px;top:364.6px;width:20px;height:20px;border-radius:50%;border:1px solid #474f66"></div>
<div class="t" style="left:1890.4px;top:367.4px;font-size:14.6px;font-weight:bold;color:#f5f9fc">?</div>
<!-- inputs -->
<div class="t" style="left:1414px;top:415.7px;font-size:14.8px;letter-spacing:.3px;color:#e4e8ec"><b style="color:#f5f9fc">a:</b> uint256</div>
<div class="abs inp" style="top:435.4px"></div>
<div class="t ph" style="top:447px">Enter a value for a</div>
<div class="t" style="left:1414px;top:485.1px;font-size:14.8px;letter-spacing:.3px;color:#e4e8ec"><b style="color:#f5f9fc">b:</b> uint256</div>
<div class="abs inp" style="top:504.8px"></div>
<div class="t ph" style="top:516.4px">Enter a value for b</div>
<div class="abs" style="left:1414px;top:559.6px;width:487px;height:1px;background:#4a526a"></div>
<div class="t" style="left:1414px;top:580.6px;font-size:14.4px;font-weight:bold;color:#f5f9fc">Last Output</div>
<div class="abs inp" style="top:600.8px;background:#3c445c;border-color:#5b6379"></div>
<div class="t ph" style="top:612.4px;color:#e1e4ea;letter-spacing:.27px">Output will appear here after running</div>
<!-- handles -->
<div class="abs" style="left:1540px;top:688.2px;width:26px;height:2.2px;background:#4a5069;border-radius:1px"></div>
<div class="abs" style="left:1168.3px;top:672.8px;width:2.2px;height:26px;background:#4a5069;border-radius:1px"></div>


<!-- ============ CONSOLE ============ -->
<div class="panel" style="left:1174px;top:694.4px;width:70px;height:34px;border-radius:5px 5px 0 0"></div>
<div class="panel" style="left:1174px;top:727.6px;width:758px;height:453.4px;border-radius:0 5px 5px 5px"></div>
<div class="t" style="left:1182.8px;top:703.8px;font-size:14.7px;color:#f5f9fc">Console</div>
<div class="t" style="left:1252.6px;top:703.8px;font-size:14.7px;color:#c6cbd0">Shell</div>
<div class="t" style="left:1302.2px;top:703.8px;font-size:14.7px;color:#c6cbd0">Markdown</div>
<div class="abs" style="left:1869px;top:736px;width:22.6px;height:23px;border-radius:5px;background:#0e1525"></div>
<div class="abs" style="left:1892.2px;top:736px;width:22.6px;height:23px;border-radius:5px;background:#0e1525"></div>
<svg style="left:1873px;top:740px" width="15" height="15" viewBox="0 0 15 15" fill="none" stroke="#f5f9fc" stroke-width="1.3" stroke-linecap="round"><circle cx="6.6" cy="6.6" r="4.6"/><path d="M10 10L12.8 12.8"/></svg>
<svg style="left:1898px;top:742px" width="11" height="11" viewBox="0 0 11 11"><path d="M2 2L9 9M9 2L2 9" stroke="#f5f9fc" stroke-width="1.9" fill="none"/></svg>
<div class="abs" id="con">
<div><svg style="position:absolute;left:1px;top:5.4px" width="8" height="9" viewBox="0 0 8 9"><path d="M1.2 1.2L5.8 4.4L1.2 7.6" stroke="#e0b61b" stroke-width="2" fill="none" stroke-linejoin="round"/></svg>  node tools</div>
<div>Done!</div>
<div>Could not determine entry point from rollupOptions or html files. Skipping dependency</div>
<div>pre-bundling.</div>
<div>Ready</div>
<div><span class="g">5:28:42 AM</span> <span class="cy">[vite]</span> <span class="y">new dependencies found: react, react-dom, ethers, evm-chains, styled</span></div>
<div><span class="y">-components, react-feather, updating...</span></div>
<div><span class="g">5:28:43 AM</span> <span class="cy">[vite]</span> <span class="sp">✨</span> <span class="gr">dependencies updated, reloading page...</span></div>
<div>Compiling contract.sol</div>
<div>Compiled</div>
</div>
<div class="abs" style="left:1188.6px;top:927.6px;width:8px;height:17.4px;border:1px solid #f5f9fc"></div>
<!-- chat button -->
<div class="abs" style="left:1879px;top:1110px;width:53px;height:37.8px;border-radius:9px 0 0 9px;background:#7857fc"></div>
<svg style="left:1894px;top:1118px" width="24" height="22" viewBox="0 0 24 22"><path d="M2 1H20Q21.4 1 21.4 2.4V20L17 16H2Q.8 16 .8 14.8V2.2Q.8 1 2 1Z" fill="#fff"/><path d="M4 6H17.4M8.4 10.4H17.4" stroke="#7857fc" stroke-width="1.8"/></svg>


</div></div>
</body>
</html>
